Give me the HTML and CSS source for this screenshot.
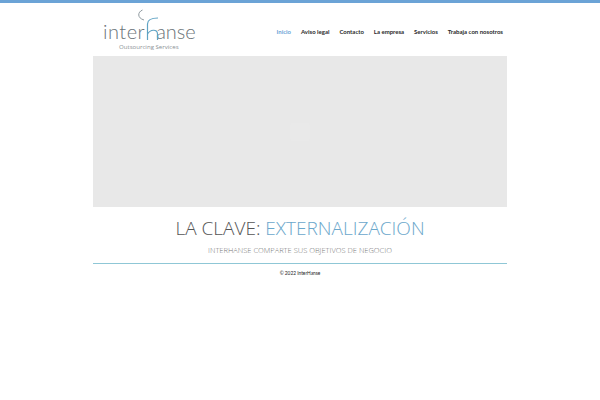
FILE: index.html
```html
<!DOCTYPE html>
<html lang="es">
<head>
<meta charset="utf-8">
<title>Interhanse</title>
<link rel="stylesheet" href="styles.css">
</head>
<body>
<div class="wrap">
  <header class="header">
    <a class="logo" href="#">
      <svg class="logo-mark" width="100" height="32" viewBox="0 0 100 32" fill="none" aria-hidden="true">
        <path d="M40.500 1C35.500 3 35 9 42 11" stroke="#8f9aa0" stroke-width="1"/>
        <path d="M45.500 31V15C45.500 11 48 9 56 9" stroke="#5fa3c4" stroke-width="1.200"/>
        <path d="M45.500 25C48 20.500 55.500 19.500 55.500 25V31" stroke="#5fa3c4" stroke-width="1.200"/>
      </svg>
      <span class="logo-name"><span class="logo-start">inter</span><span class="logo-gap"></span><span>anse</span></span>
      <span class="logo-sub">Outsourcing Services</span>
    </a>
    <nav class="nav">
      <a class="active" href="#">Inicio</a>
      <a href="#">Aviso legal</a>
      <a href="#">Contacto</a>
      <a href="#">La empresa</a>
      <a href="#">Servicios</a>
      <a href="#">Trabaja con nosotros</a>
    </nav>
  </header>
  <div class="slider"><div class="slider-mark"></div></div>
  <h1 class="title">LA CLAVE: <span>EXTERNALIZACIÓN</span></h1>
  <h2 class="subtitle">INTERHANSE COMPARTE SUS OBJETIVOS DE NEGOCIO</h2>
  <footer class="footer">© 2022 InterHanse</footer>
</div>
</body>
</html>
```
FILE: styles.css
```css
* { box-sizing: border-box; }
html, body { margin: 0; padding: 0; background: #fff; }
body {
  border-top: 3px solid #6ba3d6;
  font-family: "Lato", "Open Sans", sans-serif;
  height: 400px;
  overflow: hidden;
}
a { text-decoration: none; color: inherit; }
.wrap { width: 414px; margin-left: 93px; }
.header { height: 53px; display: flex; justify-content: space-between; align-items: flex-start; }
.logo { position: relative; display: block; width: 110px; height: 52px; margin-left: 10px; }
.logo-mark { position: absolute; left: -1px; top: 6px; }
.logo-name {
  display: flex;
  padding-top: 14px;
  font-weight: 300;
  font-size: 20px;
  line-height: 28px;
  color: #6a7378;
}
.logo-start { letter-spacing: 0.500px; }
.logo-gap { width: 11px; }
.logo-sub {
  display: block;
  margin: -2px 0 0 16px;
  font-family: "Open Sans", sans-serif;
  font-size: 6.100px;
  line-height: 8px;
  color: #8b9296;
  white-space: nowrap;
}
.nav { display: flex; gap: 9.900px; padding: 23px 4px 0 0; font-size: 6px; line-height: 12px; font-weight: 700; color: #2a2a2a; white-space: nowrap; }
.nav .active { color: #6ba3d6; }
.slider { height: 151px; background: #e8e8e8; display: flex; align-items: center; justify-content: center; }
.slider-mark { width: 20px; height: 18px; border-radius: 3px; background: #e9e9e9; }
.title {
  margin: 9px 0 0;
  text-align: center;
  font-family: "Open Sans", sans-serif;
  font-size: 19px;
  line-height: 24px;
  font-weight: 300;
  color: #555;
  white-space: nowrap;
}
.title span { color: #6ba7cb; }
.subtitle {
  margin: 4px 0 0;
  text-align: center;
  font-family: "Open Sans", sans-serif;
  font-size: 7.500px;
  line-height: 12px;
  font-weight: 300;
  color: #777;
  white-space: nowrap;
}
.footer {
  margin-top: 7px;
  padding-top: 4px;
  border-top: 1px solid #8fc7d6;
  text-align: center;
  font-size: 4.800px;
  line-height: 10px;
  color: #222;
}
```
